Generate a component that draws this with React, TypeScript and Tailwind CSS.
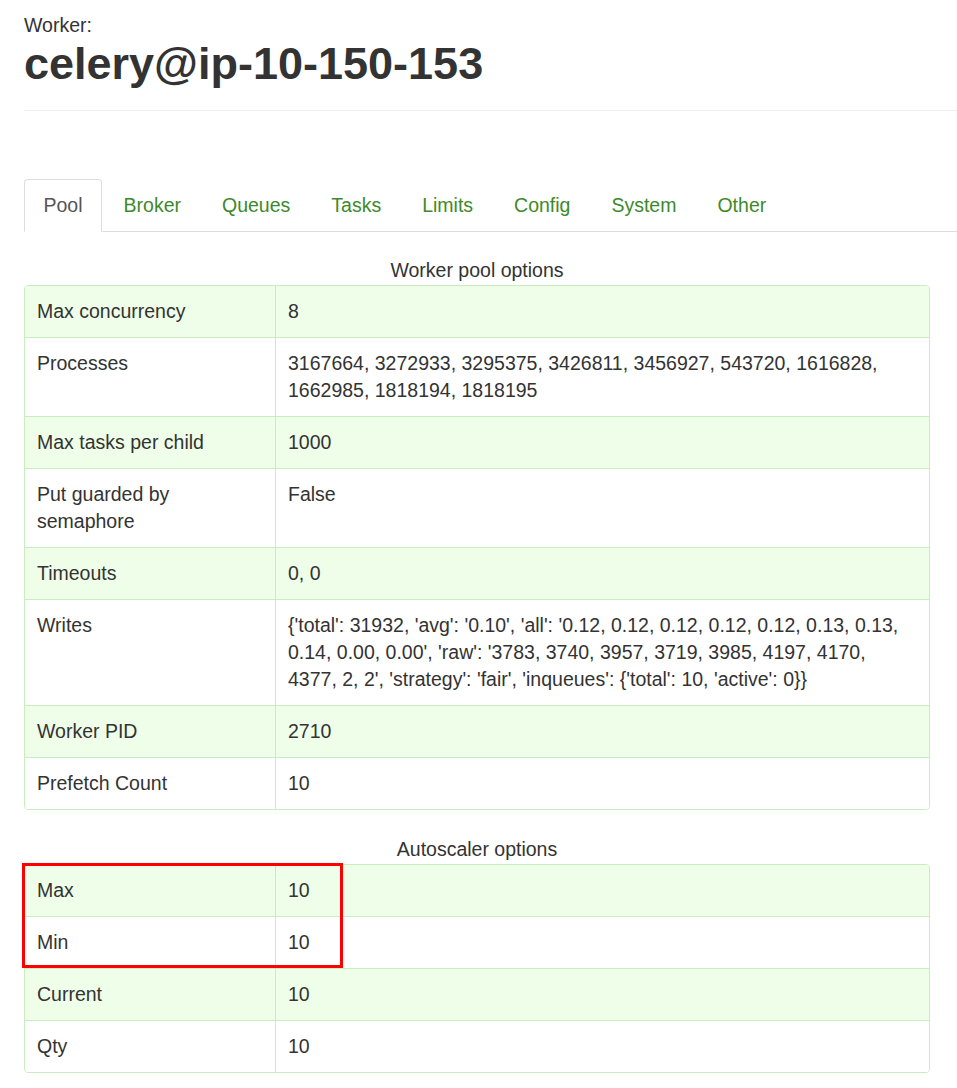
import React from 'react';

const tabs = ['Pool', 'Broker', 'Queues', 'Tasks', 'Limits', 'Config', 'System', 'Other'];

const poolRows: [string, string][] = [
  ['Max concurrency', '8'],
  ['Processes', '3167664, 3272933, 3295375, 3426811, 3456927, 543720, 1616828, 1662985, 1818194, 1818195'],
  ['Max tasks per child', '1000'],
  ['Put guarded by semaphore', 'False'],
  ['Timeouts', '0, 0'],
  [
    'Writes',
    "{'total': 31932, 'avg': '0.10', 'all': '0.12, 0.12, 0.12, 0.12, 0.12, 0.13, 0.13, 0.14, 0.00, 0.00', 'raw': '3783, 3740, 3957, 3719, 3985, 4197, 4170, 4377, 2, 2', 'strategy': 'fair', 'inqueues': {'total': 10, 'active': 0}}",
  ],
  ['Worker PID', '2710'],
  ['Prefetch Count', '10'],
];

const autoscalerRows: [string, string][] = [
  ['Max', '10'],
  ['Min', '10'],
  ['Current', '10'],
  ['Qty', '10'],
];

function OptionsTable({ caption, rows, highlight }: { caption: string; rows: [string, string][]; highlight?: boolean }) {
  return (
    <div className="w-[906px]">
      <div className="text-center h-[26px] mb-[2px]">{caption}</div>
      <div className="relative">
        <div className="border border-[#c9ecc0] rounded-[4px] overflow-hidden leading-[27px]">
          {rows.map(([k, v], i) => (
            <div
              key={k}
              className={`flex ${i % 2 === 0 ? 'bg-[#effee9]' : 'bg-white'} ${i > 0 ? 'border-t border-[#c9ecc0]' : ''}`}
            >
              <div className="w-[251px] shrink-0 px-[12px] py-[12px] border-r border-[#c9ecc0]">{k}</div>
              <div className="flex-1 px-[12px] py-[12px]">{v}</div>
            </div>
          ))}
        </div>
        {highlight && (
          <div className="absolute left-[-2px] top-[-1px] w-[321px] h-[105px] border-[3px] border-[#ff0000] pointer-events-none" />
        )}
      </div>
    </div>
  );
}

export default function App() {
  return (
    <div
      className="bg-white text-[#333] text-[19.5px] leading-[26px] min-h-screen pl-[24px] pt-[12px] overflow-hidden"
      style={{ fontFamily: '"Liberation Sans", Arial, sans-serif' }}
    >
      <div>Worker:</div>
      <h1 className="text-[45px] font-bold leading-[52px]">celery@ip-10-150-153</h1>
      <div className="mt-[20px] border-t border-[#eee]" />

      <div className="mt-[68px] flex border-b border-[#ddd]">
        {tabs.map((t, i) => (
          <div
            key={t}
            className={
              i === 0
                ? 'mr-[2px] px-[18.5px] py-[12px] border border-[#ddd] border-b-transparent rounded-t-[4px] bg-white text-[#555] mb-[-1px]'
                : 'mr-[2px] px-[18.5px] py-[12px] border border-transparent text-[#3e8a2a]'
            }
          >
            {t}
          </div>
        ))}
      </div>

      <div className="mt-[25px]">
        <OptionsTable caption="Worker pool options" rows={poolRows} />
      </div>
      <div className="mt-[26px]">
        <OptionsTable caption="Autoscaler options" rows={autoscalerRows} highlight />
      </div>
    </div>
  );
}
